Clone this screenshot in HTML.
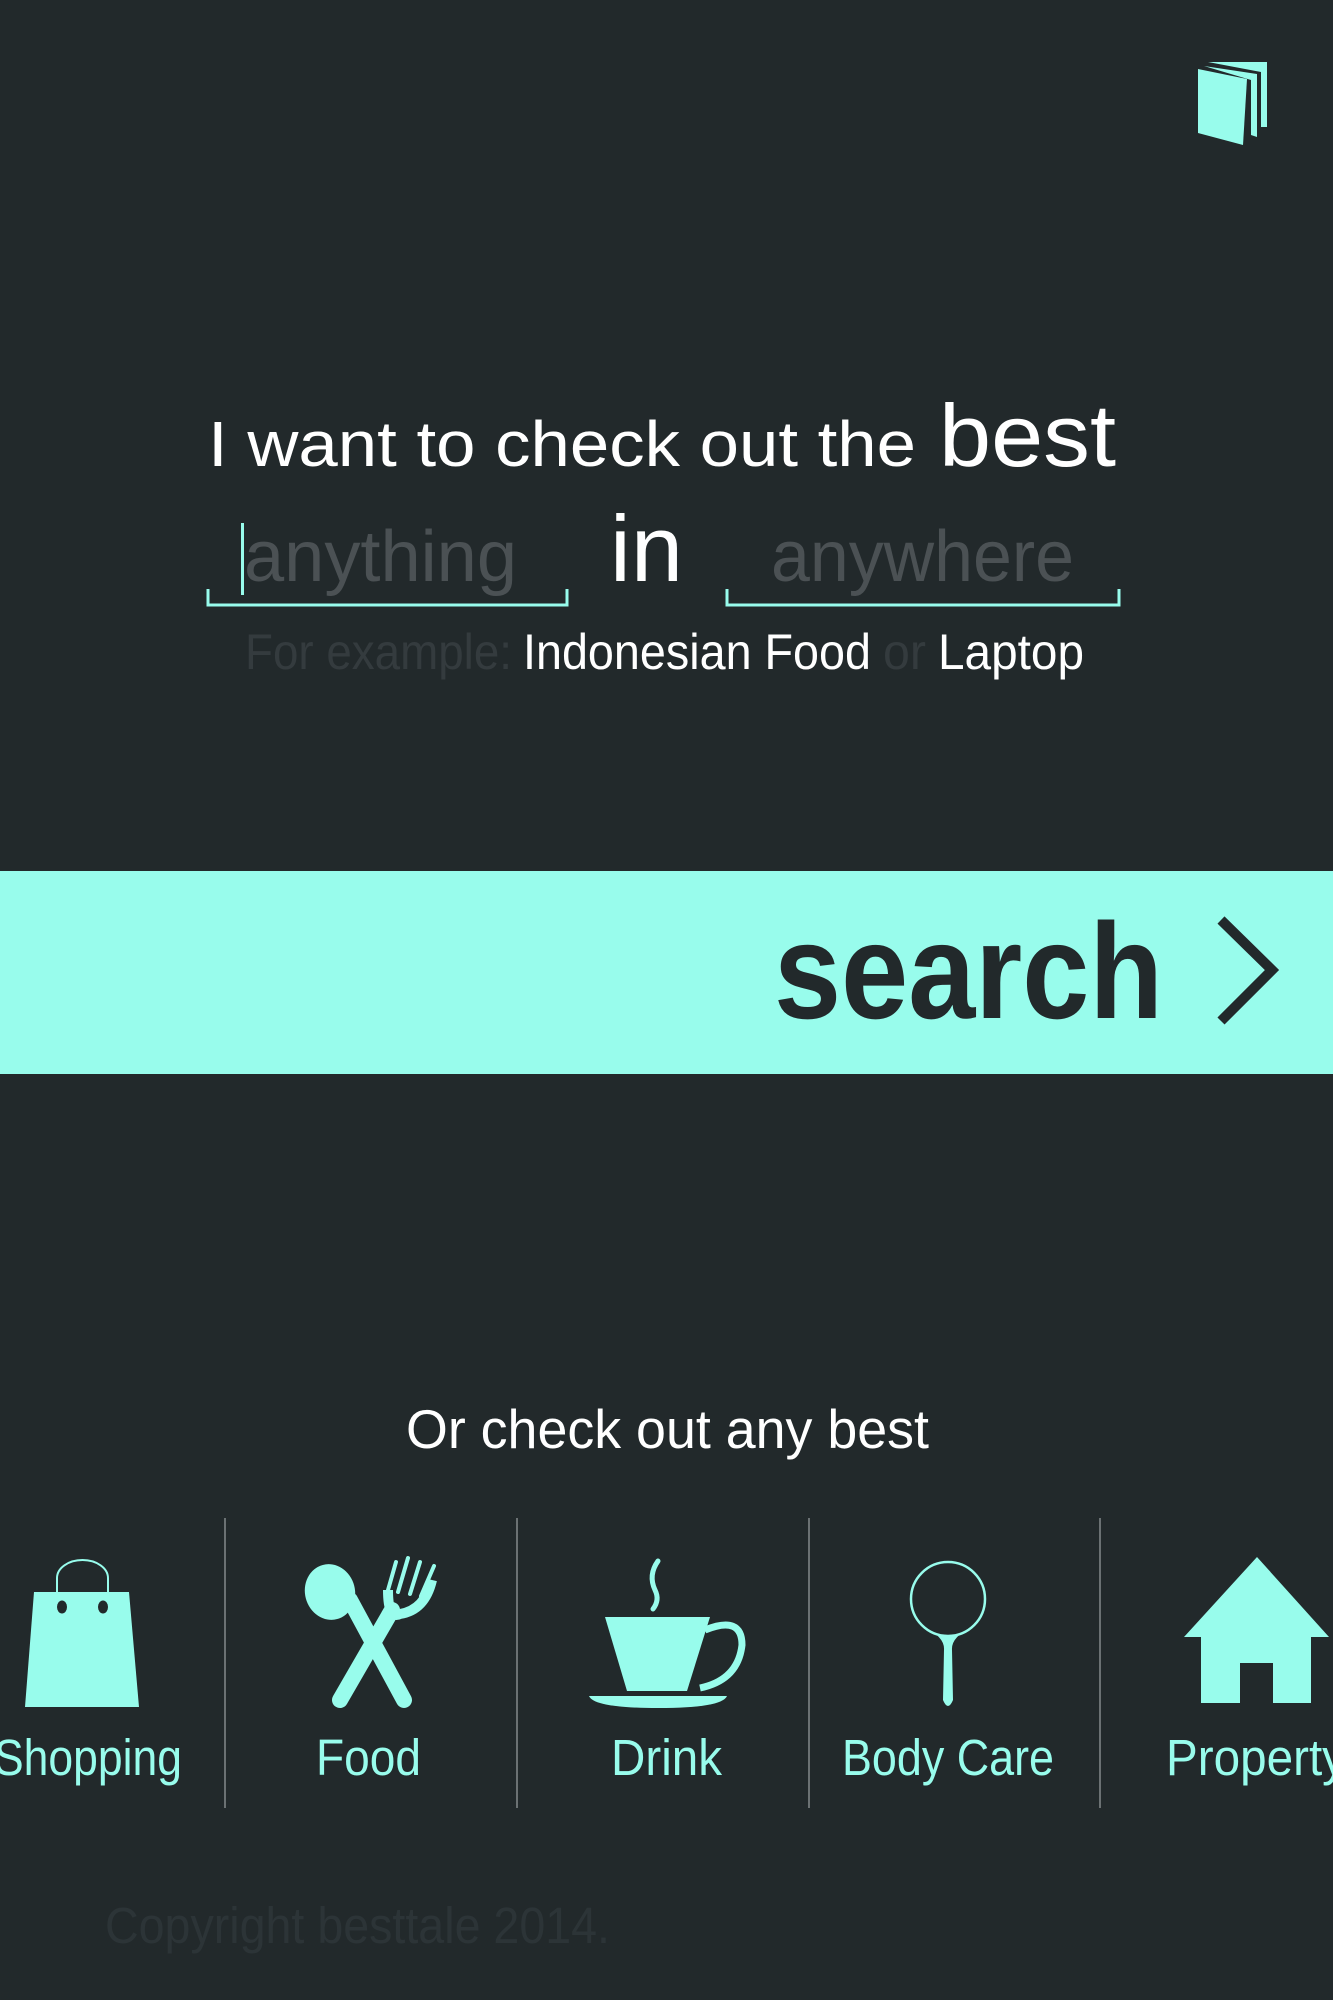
<!DOCTYPE html>
<html><head><meta charset="utf-8"><style>
html,body{margin:0;padding:0;background:#22292b;}
svg{display:block}
text{font-family:"Liberation Sans",sans-serif}
</style></head><body>
<svg width="1333" height="2000" viewBox="0 0 1333 2000" xmlns="http://www.w3.org/2000/svg">
<rect width="1333" height="2000" fill="#22292b"/>
<g fill="#98fcec">
<polygon points="1208,62 1267,62 1267,127 1261,127 1261,72"/>
<polygon points="1204,66 1257,74 1257,137 1251,135 1251,80"/>
<polygon points="1198,69 1247,79 1243,145 1198,133"/>
</g>
<text x="208" y="466" font-size="64" fill="#fff" textLength="708" lengthAdjust="spacingAndGlyphs">I want to check out the</text>
<text x="939" y="466" font-size="88" fill="#fff" textLength="177" lengthAdjust="spacingAndGlyphs">best</text>
<text x="244" y="581" font-size="72" fill="#4b5154" textLength="273" lengthAdjust="spacingAndGlyphs">anything</text>
<rect x="241" y="523" width="3" height="72" fill="#98fcec"/>
<path d="M208,589 V605 H567 V589" fill="none" stroke="#98fcec" stroke-width="3"/>
<text x="610" y="581" font-size="94" fill="#fff" textLength="73" lengthAdjust="spacingAndGlyphs">in</text>
<text x="771" y="581" font-size="72" fill="#4b5154" textLength="303" lengthAdjust="spacingAndGlyphs">anywhere</text>
<path d="M727,589 V605 H1119 V589" fill="none" stroke="#98fcec" stroke-width="3"/>
<text x="245" y="669" font-size="50" fill="#343b3e" textLength="267" lengthAdjust="spacingAndGlyphs">For example:</text>
<text x="523" y="669" font-size="50" fill="#fff" textLength="348" lengthAdjust="spacingAndGlyphs">Indonesian Food</text>
<text x="883" y="669" font-size="50" fill="#343b3e" textLength="43" lengthAdjust="spacingAndGlyphs">or</text>
<text x="938" y="669" font-size="50" fill="#fff" textLength="146" lengthAdjust="spacingAndGlyphs">Laptop</text>
<rect x="0" y="871" width="1333" height="203" fill="#98fcec"/>
<text x="774" y="1018" font-size="136" font-weight="bold" fill="#22292b" textLength="389" lengthAdjust="spacingAndGlyphs">search</text>
<polyline points="1221,920 1272,970 1221,1021" fill="none" stroke="#22292b" stroke-width="10"/>
<text x="406" y="1448" font-size="55" fill="#fff" textLength="523" lengthAdjust="spacingAndGlyphs">Or check out any best</text>
<g fill="#6b7173">
<rect x="224" y="1518" width="2" height="290"/>
<rect x="516" y="1518" width="2" height="290"/>
<rect x="808" y="1518" width="2" height="290"/>
<rect x="1099" y="1518" width="2" height="290"/>
</g>
<g fill="#98fcec" stroke="none">
<polygon points="34,1592 129,1592 139,1707 25,1707"/>
<path d="M57,1592 V1578 A25.5,18 0 0 1 108,1578 V1592" fill="none" stroke="#98fcec" stroke-width="2"/>
<ellipse cx="62" cy="1607" rx="5" ry="6.5" fill="#22292b"/>
<ellipse cx="103" cy="1607" rx="5" ry="6.5" fill="#22292b"/>
<ellipse cx="330" cy="1592" rx="25" ry="28" transform="rotate(-15 330 1592)"/>
<path d="M350,1600 L404,1700" stroke="#98fcec" stroke-width="16" stroke-linecap="round" fill="none"/>
<path d="M392,1610 L340,1700" stroke="#98fcec" stroke-width="16" stroke-linecap="round" fill="none"/>
<path d="M388,1590 Q388,1620 400,1614 Q425,1610 432,1580" stroke="#98fcec" stroke-width="10" fill="none"/>
<g stroke="#98fcec" stroke-width="4" stroke-linecap="round" fill="none">
<path d="M388,1590 L396,1562"/><path d="M398,1592 L408,1558"/><path d="M410,1594 L420,1562"/><path d="M421,1596 L434,1566"/>
</g>
<path d="M605,1617 H710 L687,1691 H627 Z"/>
<path d="M705,1630 Q742,1615 742,1645 Q738,1680 700,1688" fill="none" stroke="#98fcec" stroke-width="7"/>
<path d="M589,1696 H727 Q722,1708 658,1708 Q594,1708 589,1696 Z"/>
<path d="M658,1561 Q648,1575 655,1590 Q660,1600 653,1609" fill="none" stroke="#98fcec" stroke-width="5" stroke-linecap="round"/>
<circle cx="948" cy="1599" r="37" fill="none" stroke="#98fcec" stroke-width="2.5"/>
<path d="M924,1627 Q945,1637 944,1650 L943,1700 Q948,1712 953,1700 L952,1650 Q951,1637 972,1627 Q948,1645 924,1627 Z"/>
<polygon points="1257,1557 1329,1637 1311,1637 1311,1703 1273,1703 1273,1663 1240,1663 1240,1703 1201,1703 1201,1637 1184,1637"/>
</g>
<g font-size="51" fill="#98fcec">
<text x="-6" y="1775" textLength="188" lengthAdjust="spacingAndGlyphs">Shopping</text>
<text x="316" y="1775" textLength="105" lengthAdjust="spacingAndGlyphs">Food</text>
<text x="611" y="1775" textLength="111" lengthAdjust="spacingAndGlyphs">Drink</text>
<text x="842" y="1775" textLength="212" lengthAdjust="spacingAndGlyphs">Body Care</text>
<text x="1166" y="1775" textLength="180" lengthAdjust="spacingAndGlyphs">Property</text>
</g>
<text x="105" y="1943" font-size="51" fill="#2c3437" textLength="505" lengthAdjust="spacingAndGlyphs">Copyright besttale 2014.</text>
</svg>
</body></html>
